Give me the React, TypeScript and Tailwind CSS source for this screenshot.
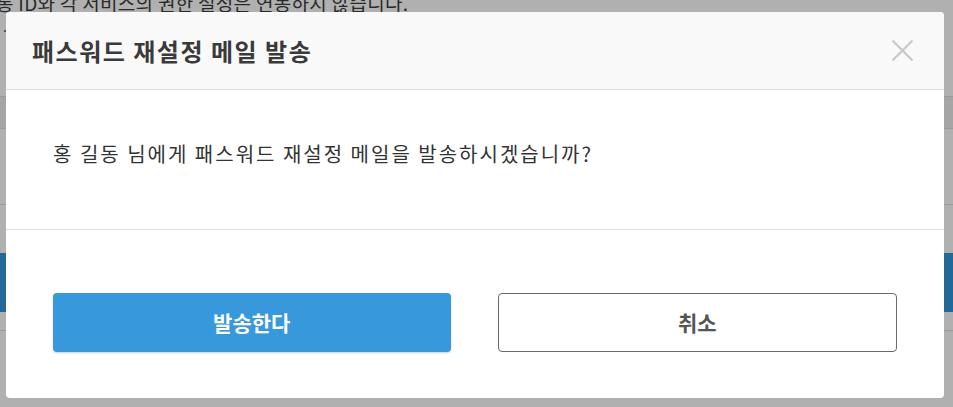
import React from "react";

const FONT = "font-['Malgun_Gothic','Noto_Sans_CJK_KR','Noto_Sans',sans-serif]";

export default function App() {
  return (
    <div className={`relative h-[407px] w-[953px] overflow-hidden bg-white ${FONT}`}>
      <BackgroundPage />

      {/* dim overlay */}
      <div className="absolute inset-0 bg-black/[0.31]" />

      <ResetMailModal />
    </div>
  );
}

const BackgroundPage = () => {
  return (
    <div className="flex flex-col">
      <div className="h-[96px]">
        <p className="-ml-[4px] -mt-[8px] text-[19px] leading-[22px] tracking-[0.3px] text-[#3c3c3c] whitespace-nowrap">
          통 ID와 각 서비스의 권한 설정은 연동하지 않습니다.
        </p>
        <div className="ml-[4px] mt-[16px] h-[2px] w-[2px] rounded-full bg-[#555]" />
      </div>
      <div className="h-[33px] border-y border-[#dfdfdf] bg-[#efefef]" />
      <div className="h-[76px] border-b border-[#dfdfdf]" />
      <div className="h-[48px]" />
      <div className="h-[59px] bg-[#3399dd]" />
      <div className="h-[19px] border-b border-[#dfdfdf]" />
      <div className="h-[80px]" />
    </div>
  );
};

const ResetMailModal = () => {
  return (
    <div className="absolute left-[6px] top-[12px] flex w-[938px] flex-col overflow-hidden rounded-[4px] bg-white">
      <div className="flex h-[78px] items-center justify-between border-b border-[#dddddd] bg-[#f9f9f9] pl-[26px] pr-[30px]">
        <h2 className="text-[24px] font-bold tracking-[1.5px] text-[#3a3a3a]">
          패스워드 재설정 메일 발송
        </h2>
        <button type="button" className="flex h-[24px] w-[24px] items-center justify-center">
          <svg width="23" height="23" viewBox="0 0 23 23" fill="none">
            <path d="M1.5 1.5 L21.5 21.5 M21.5 1.5 L1.5 21.5" stroke="#c8c8c8" strokeWidth="2.2" />
          </svg>
        </button>
      </div>

      <div className="h-[140px] border-b border-[#e0e0e0] px-[47px] pt-[50px]">
        <p className="text-[20px] leading-[28px] tracking-[2px] text-[#333]">
          홍 길동 님에게 패스워드 재설정 메일을 발송하시겠습니까?
        </p>
      </div>

      <div className="flex gap-[47px] px-[47px] pb-[46px] pt-[63px]">
        <button
          type="button"
          className="h-[59px] flex-1 rounded-[4px] bg-[#3799db] text-[21px] font-bold text-white shadow-[0_1px_2px_rgba(0,0,0,0.2)]"
        >
          발송한다
        </button>
        <button
          type="button"
          className="h-[59px] flex-1 rounded-[4px] border border-[#6a6a6a] bg-white text-[21px] font-bold text-[#555]"
        >
          취소
        </button>
      </div>
    </div>
  );
};
